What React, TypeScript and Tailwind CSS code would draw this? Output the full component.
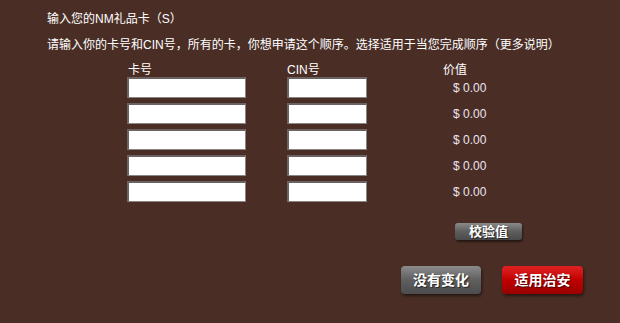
const font = { fontFamily: '"Liberation Sans", "Noto Sans CJK SC", sans-serif' };

const rows = [0, 1, 2, 3, 4];

export default function App() {
  return (
    <div
      className="w-[620px] h-[323px] bg-[#4a2e26] text-white text-[12px] leading-none relative overflow-hidden"
      style={font}
    >
      <div className="pl-[47px] pt-[13px]">
        <p className="h-[14px]">输入您的NM礼品卡（S）</p>
        <p className="mt-[12px] h-[14px]">
          请输入你的卡号和CIN号，所有的卡，你想申请这个顺序。选择适用于当您完成顺序（更多说明）
        </p>
      </div>

      <div className="flex mt-[11px] pl-[127px]">
        <div className="w-[160px]">
          <p className="h-[13px] pl-[1px]">卡号</p>
        </div>
        <div className="w-[156px]">
          <p className="h-[13px]">CIN号</p>
        </div>
        <div>
          <p className="h-[13px]">价值</p>
        </div>
      </div>

      <div className="flex flex-col gap-[5px] pl-[127px]">
        {rows.map((r) => (
          <div key={r} className="flex items-center h-[21px]">
            <input
              type="text"
              className="w-[119px] h-[21px] bg-white border-t-2 border-l-2 border-[#6b6262] border-r border-b border-r-[#8a8585] border-b-[#8a8585] outline-none"
            />
            <input
              type="text"
              className="ml-[41px] w-[80px] h-[21px] bg-white border-t-2 border-l-2 border-[#6b6262] border-r border-b border-r-[#8a8585] border-b-[#8a8585] outline-none"
            />
            <span className="ml-[86px] text-[#ece4f2]">$ 0.00</span>
          </div>
        ))}
      </div>

      <div className="flex pl-[455px] mt-[21px]">
        <button className="w-[67px] h-[17px] rounded-[3px] bg-gradient-to-b from-[#8a8a8a] via-[#5e5e5e] to-[#4a4a4a] text-white font-bold text-[13px] leading-none shadow-[1px_2px_2px_rgba(0,0,0,0.5)] [text-shadow:1px_1px_1px_rgba(0,0,0,0.6)]">
          校验值
        </button>
      </div>

      <div className="flex pl-[401px] gap-[21px] mt-[26px]">
        <button className="w-[80px] h-[28px] rounded-[4px] bg-gradient-to-b from-[#8c8c8c] via-[#5f5f5f] to-[#4c4c4c] text-white font-bold text-[14px] leading-none shadow-[1px_2px_3px_rgba(0,0,0,0.5)] [text-shadow:1px_1px_1px_rgba(0,0,0,0.6)]">
          没有变化
        </button>
        <button className="w-[81px] h-[28px] rounded-[4px] bg-gradient-to-b from-[#e02020] via-[#c00000] to-[#9a0000] text-white font-bold text-[14px] leading-none shadow-[1px_2px_3px_rgba(0,0,0,0.5)] [text-shadow:1px_1px_1px_rgba(0,0,0,0.6)]">
          适用治安
        </button>
      </div>
    </div>
  );
}
